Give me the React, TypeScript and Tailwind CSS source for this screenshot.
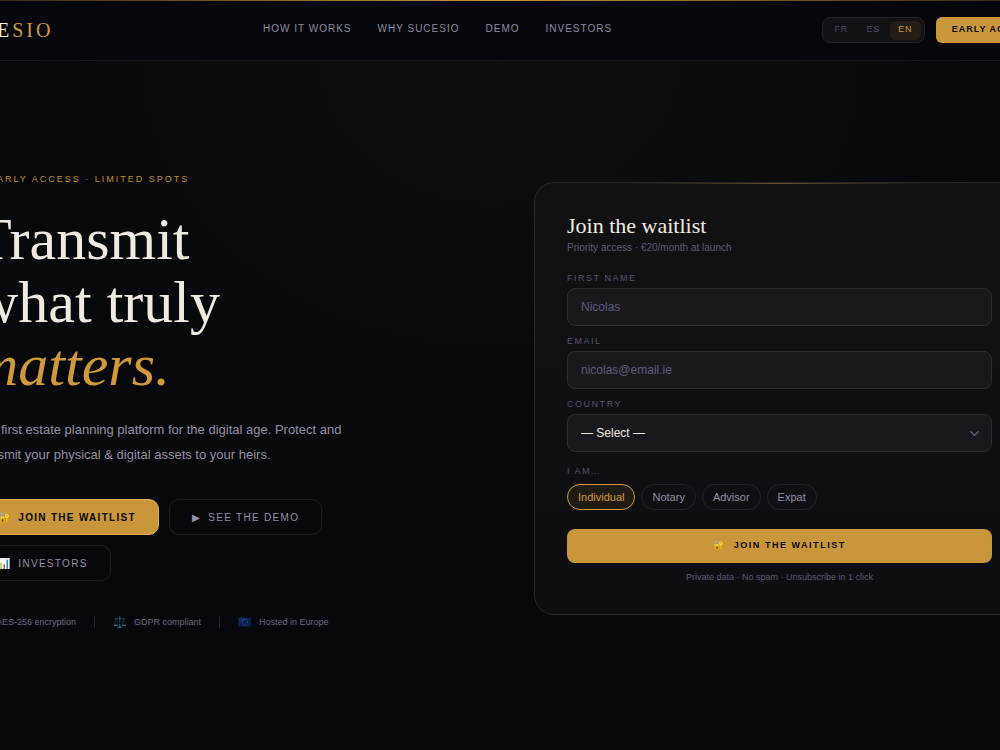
import { ChevronDown } from 'lucide-react';

const navLinks = ['How it works', 'Why Sucesio', 'Demo', 'Investors'];
const languages = ['FR', 'ES', 'EN'];
const profiles = ['Individual', 'Notary', 'Advisor', 'Expat'];

const trust = [
  { icon: '🔒', label: 'AES-256 encryption' },
  { icon: '⚖️', label: 'GDPR compliant' },
  { icon: '🇪🇺', label: 'Hosted in Europe' },
];

const labelClass = 'block text-[9px] leading-[14px] tracking-[0.17em] uppercase text-[#56546c]';
const fieldClass =
  'mt-[3px] h-[38px] w-full rounded-lg border border-[#2b2b30] bg-[#19191d] px-[13px] text-[12px] outline-none';
const ghostClass =
  'flex h-9 items-center gap-[7px] rounded-[10px] border border-[#1b1c20] px-[22px] text-[10px] uppercase tracking-[0.13em] text-[#9490a6]';

function Header() {
  return (
    <header className="border-b border-[#17181b] bg-[#06070c]">
      <div className="h-px bg-linear-to-r from-[#3a2c18] via-[#c9963c] to-[#3a2c18]" />
      <div className="-ml-[51px] -mr-[49px] flex h-[58px] items-center justify-between">
        <a href="#" className="font-['Liberation_Serif',serif] text-[20px] tracking-[3px] text-[#f0ebe0]">
          SUCE<span className="text-[#d09a3c]">SIO</span>
        </a>
        <nav className="flex gap-[26px] pb-1">
          {navLinks.map((link) => (
            <a key={link} href="#" className="text-[10px] uppercase tracking-[1px] text-[#8e8aa0]">
              {link}
            </a>
          ))}
        </nav>
        <div className="flex items-center gap-[11px]">
          <div className="flex h-[26px] items-center gap-px rounded-lg border border-[#222227] bg-[#111216] px-[3px]">
            {languages.map((lang) => (
              <button
                key={lang}
                className={`h-[19px] w-[31px] rounded-[5px] text-[9px] tracking-[0.08em] ${lang === 'EN' ? 'bg-[#241d17] text-[#d09a3c]' : 'text-[#4d4a60]'}`}
              >
                {lang}
              </button>
            ))}
          </div>
          <button className="h-[26px] rounded-md bg-[#c9963c] px-4 text-[9px] font-bold uppercase tracking-[1px] text-[#0a0806]">
            Early access
          </button>
        </div>
      </div>
      <div className="h-px" />
    </header>
  );
}

function Pitch() {
  return (
    <div className="pt-1">
      <p className="flex items-center gap-[10px] text-[9px] leading-[14px] uppercase tracking-[2px] text-[#c08e38]">
        <span className="size-1 rounded-full bg-[#d09a3c]" />
        Early access · Limited spots
      </p>
      <h1 className="mt-[22px] font-['Liberation_Serif',serif] text-[60px] leading-[63px] text-[#f0ebe0]">
        Transmit
        <br />
        what truly
        <br />
        <em className="text-[#d09a3c]">matters.</em>
      </h1>
      <p className="mt-5 max-w-[400px] text-[13px] leading-[25px] text-[#9490a6]">
        The first estate planning platform for the digital age. Protect and transmit your physical &amp; digital assets to your heirs.
      </p>
      <div className="mt-8 flex max-w-[400px] flex-wrap gap-[10px]">
        <button className="flex h-9 items-center gap-[7px] rounded-[10px] border border-[#e2ac4a] bg-[#c9963c] px-[22px] text-[10px] font-bold uppercase tracking-[0.13em] text-[#0a0806]">
          <span>🔐</span> Join the waitlist
        </button>
        <button className={ghostClass}>
          <span>▶</span> See the demo
        </button>
        <button className={ghostClass}>
          <span>📊</span> Investors
        </button>
      </div>
      <ul className="mt-[34px] flex items-center gap-[18px] whitespace-nowrap text-[9px] leading-[14px] text-[#6c6880]">
        {trust.map((item, i) => (
          <li key={item.label} className="flex items-center gap-[18px]">
            {i > 0 && <span className="h-3 w-px bg-[#24252b]" />}
            <span className="flex items-center gap-[7px]">
              <span className="text-[11px] opacity-60">{item.icon}</span>
              {item.label}
            </span>
          </li>
        ))}
      </ul>
    </div>
  );
}

function WaitlistCard() {
  return (
    <form className="overflow-hidden rounded-[20px] border border-[#26272b] bg-linear-to-b from-[#121214] to-[#0d0e12]">
      <div className="h-px bg-linear-to-r from-transparent from-20% via-[#63502c] to-transparent to-80%" />
      <div className="px-8 pt-[31px] pb-[30px]">
        <h2 className="font-['Liberation_Serif',serif] text-[22px] leading-[22px] text-[#f0ebe0]">Join the waitlist</h2>
        <p className="mt-1 text-[10px] leading-[14px] text-[#5c5a72]">Priority access · €20/month at launch</p>
        <div className="mt-4 flex flex-col gap-2">
          <div>
            <label htmlFor="name" className={labelClass}>First name</label>
            <input id="name" placeholder="Nicolas" className={`${fieldClass} placeholder:text-[#5d5b7a]`} />
          </div>
          <div>
            <label htmlFor="email" className={labelClass}>Email</label>
            <input id="email" type="email" placeholder="nicolas@email.ie" className={`${fieldClass} placeholder:text-[#5d5b7a]`} />
          </div>
          <div>
            <label htmlFor="country" className={labelClass}>Country</label>
            <div className="relative">
              <select id="country" className={`${fieldClass} appearance-none text-[#f0ebe0]`}>
                <option>— Select —</option>
              </select>
              <ChevronDown size={15} className="pointer-events-none absolute top-[15px] right-[10px] text-[#6a6780]" />
            </div>
          </div>
        </div>
        <fieldset className="mt-3">
          <legend className={labelClass}>I am…</legend>
          <div className="mt-[6px] flex gap-[6px]">
            {profiles.map((profile, i) => (
              <button
                key={profile}
                type="button"
                className={`h-[26px] rounded-full border px-[10px] text-[11px] ${i === 0 ? 'border-[#d09a3c] bg-[#211b15] text-[#d09a3c]' : 'border-[#222328] text-[#9490a6]'}`}
              >
                {profile}
              </button>
            ))}
          </div>
        </fieldset>
        <button className="mt-[19px] flex h-[34px] w-full items-center justify-center gap-2 rounded-lg bg-[#c9963c] text-[9px] font-bold uppercase tracking-[0.17em] text-[#0a0806]">
          <span>🔐</span> Join the waitlist
        </button>
        <p className="mt-[7px] text-center text-[9px] leading-[14px] text-[#5c5a72]">
          Private data · No spam · Unsubscribe in 1 click
        </p>
      </div>
    </form>
  );
}

export default function App() {
  return (
    <div className="flex min-h-screen flex-col overflow-x-hidden bg-[#07080c] font-['Liberation_Sans',sans-serif]">
      <Header />
      <main className="flex flex-1 items-center bg-[radial-gradient(ellipse_500px_400px_at_50%_0%,#0f0f0e_0%,#07080c_100%)] pb-[14px]">
        <div className="-mx-[25px] grid flex-1 grid-cols-2 items-center gap-[68px]">
          <Pitch />
          <WaitlistCard />
        </div>
      </main>
    </div>
  );
}
